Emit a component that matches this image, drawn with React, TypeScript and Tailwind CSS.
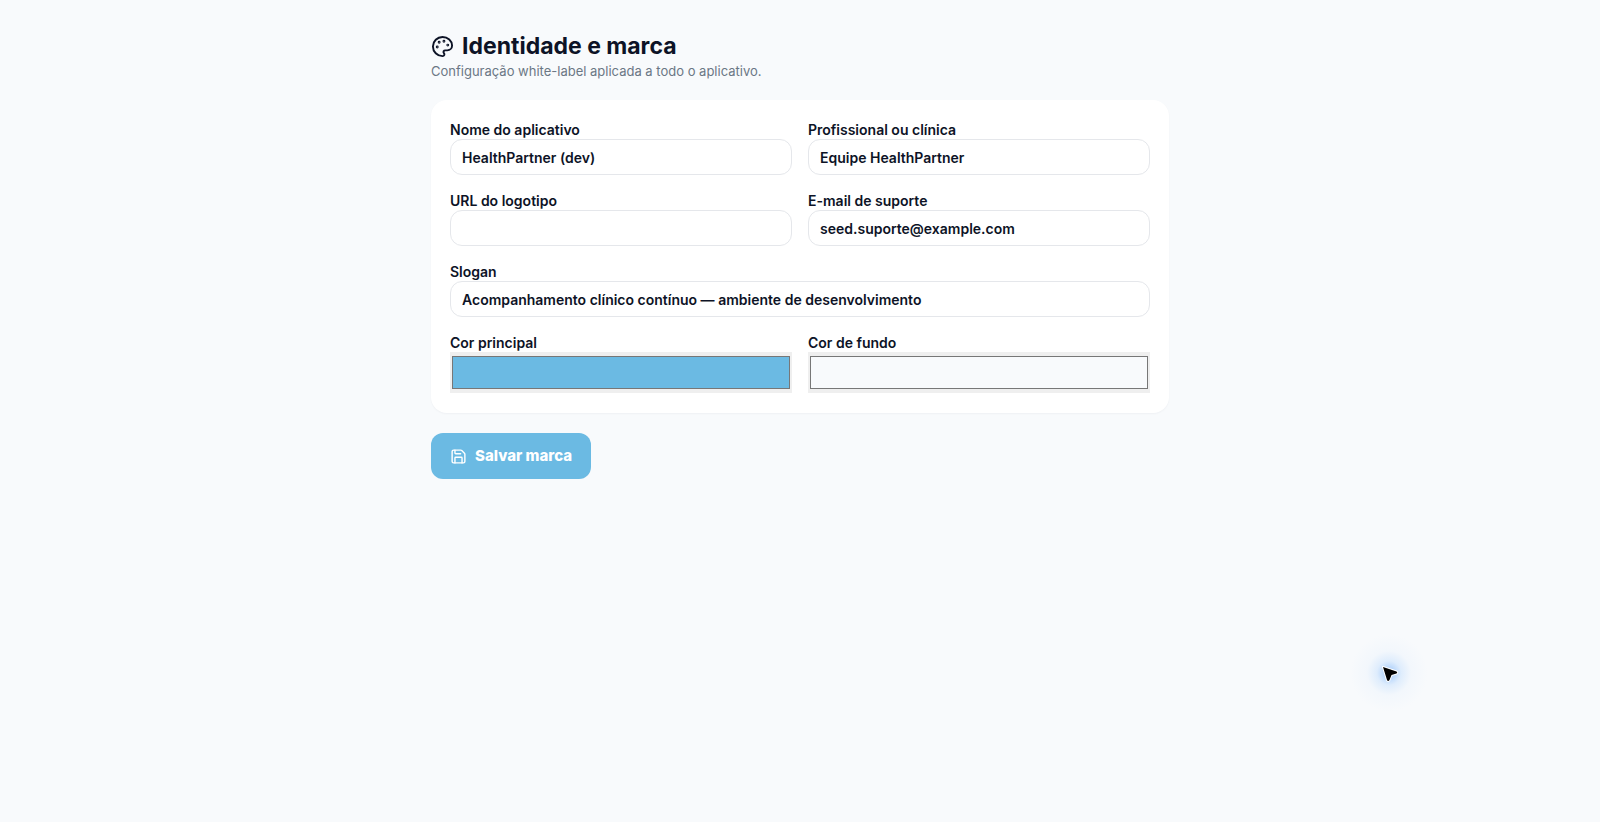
import { useState } from 'react';
import { Palette, Save } from 'lucide-react';

interface Brand {
  appName: string;
  professional: string;
  logoUrl: string;
  supportEmail: string;
  slogan: string;
  primaryColor: string;
  backgroundColor: string;
}

interface FieldProps {
  id: keyof Brand;
  label: string;
  type?: string;
  value: string;
  onChange: (id: keyof Brand, value: string) => void;
  className?: string;
}

const inputStyle =
  'block h-9 w-full rounded-xl border border-gray-200 bg-white px-[11px] text-sm font-semibold outline-none focus:border-[#6bbae3]';
const colorStyle = 'block h-[41px] w-full bg-[#efefef]';

function Field({ id, label, type = 'text', value, onChange, className = '' }: FieldProps) {
  return (
    <div className={className}>
      <label htmlFor={id} className="block text-sm/[19px] font-semibold">
        {label}
      </label>
      <input
        id={id}
        type={type}
        value={value}
        onChange={(e) => onChange(id, e.target.value)}
        className={type === 'color' ? colorStyle : inputStyle}
      />
    </div>
  );
}

function Pointer() {
  return (
    <div className="pointer-events-none absolute top-[634px] left-[87%] size-[78px] -translate-x-[42px] bg-[radial-gradient(circle,#60a5fa99_0%,#93c5fd40_22%,#bfdbfe18_40%,transparent_70%)]">
      <svg viewBox="0 0 78 78" className="size-full" aria-hidden="true">
        <path
          d="M33 33 L46.5 37.5 Q48 38.5 46.5 39.5 L41.5 41 L39.5 46 Q38 48 37 46 Z"
          fill="#000"
          stroke="#fff"
          strokeWidth="2"
          strokeLinejoin="round"
          paintOrder="stroke"
        />
      </svg>
    </div>
  );
}

export default function App() {
  const [brand, setBrand] = useState<Brand>({
    appName: 'HealthPartner (dev)',
    professional: 'Equipe HealthPartner',
    logoUrl: '',
    supportEmail: 'seed.suporte@example.com',
    slogan: 'Acompanhamento clínico contínuo — ambiente de desenvolvimento',
    primaryColor: '#6bbae3',
    backgroundColor: '#f8fafc',
  });

  const update = (id: keyof Brand, value: string) => {
    setBrand((prev) => ({ ...prev, [id]: value }));
  };

  return (
    <div className="relative min-h-screen bg-[#f8fafc] font-['Inter',sans-serif] text-[#0d1326]">
      <main className="mx-auto max-w-[738px] py-[31px]">
        <header>
          <h1 className="flex items-center gap-2 text-[23px]/[31px] font-bold">
            <Palette size={23} />
            Identidade e marca
          </h1>
          <p className="text-[13px]/[19px] text-[#6b7785]">Configuração white-label aplicada a todo o aplicativo.</p>
        </header>

        <form onSubmit={(e) => e.preventDefault()} className="mt-[19px] space-y-5">
          <div className="grid grid-cols-2 gap-4 rounded-2xl bg-white px-[19px] py-5 shadow-[0_1px_2px_rgba(15,23,42,0.04)]">
            <Field id="appName" label="Nome do aplicativo" value={brand.appName} onChange={update} />
            <Field id="professional" label="Profissional ou clínica" value={brand.professional} onChange={update} />
            <Field id="logoUrl" label="URL do logotipo" value={brand.logoUrl} onChange={update} />
            <Field id="supportEmail" label="E-mail de suporte" type="email" value={brand.supportEmail} onChange={update} />
            <Field id="slogan" label="Slogan" value={brand.slogan} onChange={update} className="col-span-2" />
            <Field id="primaryColor" label="Cor principal" type="color" value={brand.primaryColor} onChange={update} />
            <Field id="backgroundColor" label="Cor de fundo" type="color" value={brand.backgroundColor} onChange={update} />
          </div>

          <button
            type="submit"
            className="flex h-[46px] items-center gap-2 rounded-xl bg-[#6bbae3] px-[19px] text-[15px] font-extrabold text-white"
          >
            <Save size={17} />
            Salvar marca
          </button>
        </form>
      </main>
      <Pointer />
    </div>
  );
}
